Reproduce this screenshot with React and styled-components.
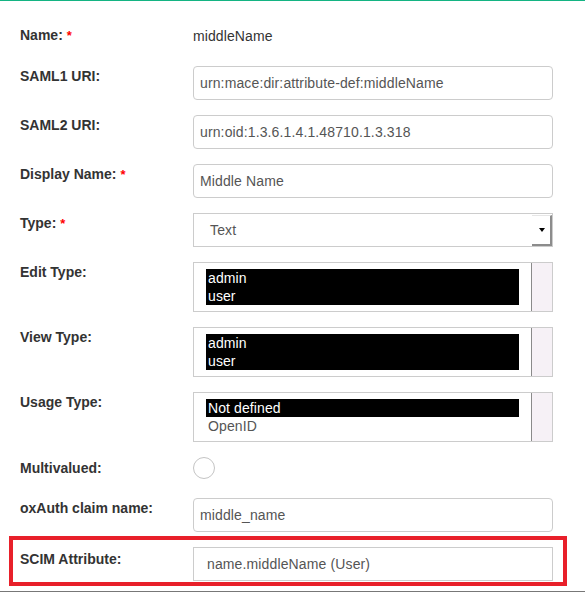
import React from "react";
import styled, { createGlobalStyle } from "styled-components";

const Global = createGlobalStyle`
  html, body { margin: 0; padding: 0; background: #fff; }
  body { font-family: "Liberation Sans", Arial, Helvetica, sans-serif; }
`;

const Page = styled.div`
  width: 585px;
  box-sizing: border-box;
  border-top: 1px solid #14b483;
  border-bottom: 1px solid #777;
  padding: 24px 32px 5px 20px;
`;

const Row = styled.div`
  display: grid;
  grid-template-columns: 173px 360px;
  align-items: start;
  margin-bottom: ${(p) => p.$mb ?? 15}px;
`;

const Highlight = styled(Row)`
  border: 4px solid #e8202a;
  margin: 0 -14px 0 -11px;
  padding: 7px 10px 1px 7px;
`;

const Label = styled.div`
  font-weight: bold;
  font-size: 14px;
  line-height: 20px;
  color: #333;
  padding-top: ${(p) => p.$offset ?? 0}px;
`;

const Required = styled.span`
  color: #f00;
  margin-left: 4px;
  font-size: 13px;
`;

const Value = styled.div`
  font-size: 14px;
  line-height: 20px;
  color: #333;
  padding-top: 1px;
  letter-spacing: 0.1px;
`;

const Input = styled.div`
  box-sizing: border-box;
  height: 34px;
  border: 1px solid #ccc;
  border-radius: ${(p) => (p.$square ? 0 : 4)}px;
  padding-left: ${(p) => p.$pad ?? 6}px;
  display: flex;
  align-items: center;
  font-size: 14px;
  letter-spacing: 0.13px;
  color: #555;
  background: #fff;
`;

const Select = styled.div`
  box-sizing: border-box;
  height: 34px;
  border: 1px solid #ccc;
  display: flex;
  align-items: stretch;
  font-size: 14px;
  letter-spacing: 0.13px;
  color: #555;
  background: #fff;
`;

const SelectText = styled.div`
  flex: 1;
  display: flex;
  align-items: center;
  padding-left: 16px;
`;

const ArrowBox = styled.div`
  width: 18px;
  margin: 1px 0 0 0;
  border-top: 1px solid #e6e6e6;
  border-right: 2px solid #8c8c8c;
  border-bottom: 2px solid #8c8c8c;
  display: flex;
  align-items: center;
  justify-content: center;
`;

const Arrow = styled.div`
  width: 0;
  height: 0;
  border-left: 3.5px solid transparent;
  border-right: 3.5px solid transparent;
  border-top: 4px solid #000;
  margin-left: 2px;
`;

const ListBox = styled.div`
  box-sizing: border-box;
  height: 50px;
  border: 1px solid #ccc;
  display: flex;
  background: #fff;
`;

const Options = styled.div`
  flex: 1;
  padding: 6px 12px 0 12px;
`;

const Option = styled.div`
  font-size: 14px;
  line-height: 18px;
  height: 18px;
  padding-left: 2px;
  letter-spacing: 0.1px;
  background: ${(p) => (p.$selected ? "#000" : "transparent")};
  color: ${(p) => (p.$selected ? "#fff" : "#555")};
`;

const Track = styled.div`
  width: 20px;
  border-left: 1px solid #8a8a8a;
  background: #f6f1f6;
`;

const Radio = styled.div`
  box-sizing: border-box;
  width: 22px;
  height: 22px;
  border-radius: 50%;
  border: 1px solid #c4c4c4;
  background: #fff;
`;

const Field = ({ label, required, offset, children, mb }) => (
  <Row $mb={mb}>
    <Label $offset={offset}>
      {label}
      {required && <Required>*</Required>}
    </Label>
    {children}
  </Row>
);

const List = ({ items, selected }) => (
  <ListBox>
    <Options>
      {items.map((it) => (
        <Option key={it} $selected={selected.includes(it)}>
          {it}
        </Option>
      ))}
    </Options>
    <Track />
  </ListBox>
);

export default function App() {
  return (
    <>
      <Global />
      <Page>
        <Field label="Name:" required mb={20}>
          <Value>middleName</Value>
        </Field>
        <Field label="SAML1 URI:">
          <Input>urn:mace:dir:attribute-def:middleName</Input>
        </Field>
        <Field label="SAML2 URI:">
          <Input>urn:oid:1.3.6.1.4.1.48710.1.3.318</Input>
        </Field>
        <Field label="Display Name:" required>
          <Input>Middle Name</Input>
        </Field>
        <Field label="Type:" required>
          <Select>
            <SelectText>Text</SelectText>
            <ArrowBox>
              <Arrow />
            </ArrowBox>
          </Select>
        </Field>
        <Field label="Edit Type:">
          <List items={["admin", "user"]} selected={["admin", "user"]} />
        </Field>
        <Field label="View Type:">
          <List items={["admin", "user"]} selected={["admin", "user"]} />
        </Field>
        <Field label="Usage Type:">
          <List items={["Not defined", "OpenID"]} selected={["Not defined"]} />
        </Field>
        <Field label="Multivalued:" mb={19} offset={1}>
          <Radio />
        </Field>
        <Field label="oxAuth claim name:" mb={4}>
          <Input>middle_name</Input>
        </Field>
        <Highlight $mb={0}>
          <Label $offset={2}>SCIM Attribute:</Label>
          <Input $square $pad={13}>name.middleName (User)</Input>
        </Highlight>
      </Page>
    </>
  );
}
